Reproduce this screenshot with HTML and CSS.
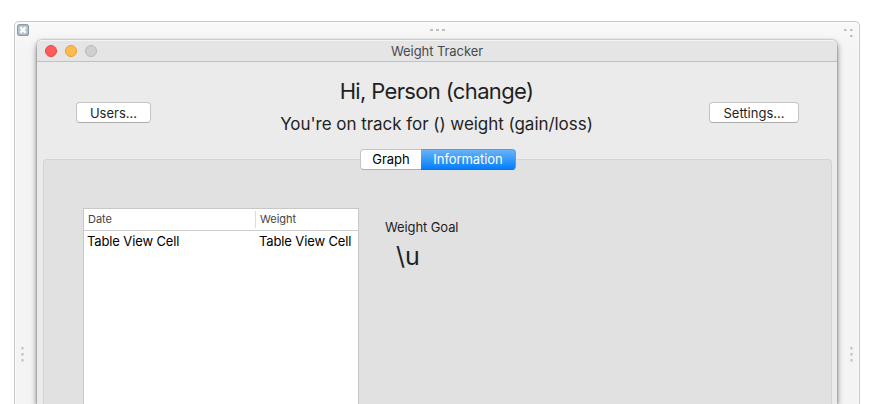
FILE: index.html
```html
<!DOCTYPE html>
<html lang="en">
<head>
<meta charset="utf-8">
<title>Weight Tracker</title>
<link rel="stylesheet" href="styles.css">
</head>
<body>
<div class="canvas">
  <svg class="close-box" width="12" height="12" viewBox="0 0 12 12"><rect x=".6" y=".6" width="10.8" height="10.8" rx="2" fill="#b9c6d1" stroke="#8d9ba8" stroke-width="1.2"/><path d="M3.4 3.4l5.2 5.2M8.6 3.4L3.4 8.6" stroke="#fff" stroke-width="2.2"/></svg>
  <svg class="grip grip-top" width="15" height="3" viewBox="0 0 15 3"><path d="M0 0h3v2H0zM6 0h3v2H6zM12 0h3v2h-3z"/></svg>
  <svg class="grip grip-corner" width="9" height="9" viewBox="0 0 9 9"><path d="M0 0h2.5v2H0zM6 0h2.5v2H6zM6 6h2.5v2H6z"/></svg>
  <svg class="grip grip-left" width="3" height="15" viewBox="0 0 3 15"><path d="M.5 0h2v2.5h-2zM.5 6h2v2.5h-2zM.5 12h2v2.5h-2z"/></svg>
  <svg class="grip grip-right" width="3" height="15" viewBox="0 0 3 15"><path d="M.5 0h2v2.5h-2zM.5 6h2v2.5h-2zM.5 12h2v2.5h-2z"/></svg>
  <main class="window">
    <header class="titlebar">
      <div class="lights"><i class="light red"></i><i class="light amber"></i><i class="light gray"></i></div>
      <span class="title">Weight Tracker</span>
    </header>
    <section class="top">
      <button class="btn users"><span>Users...</span></button>
      <div class="greeting">
        <div class="hi">Hi, Person (change)</div>
        <div class="track">You're on track for () weight (gain/loss)</div>
      </div>
      <button class="btn settings"><span>Settings...</span></button>
    </section>
    <nav class="tabs"><span class="tab">Graph</span><span class="tab active">Information</span></nav>
    <section class="panel">
      <div class="table">
        <div class="row head"><span class="date">Date</span><span class="weight">Weight</span></div>
        <div class="row"><span class="date cell">Table View Cell</span><span class="weight cell">Table View Cell</span></div>
      </div>
      <div class="goal">
        <div class="goal-label">Weight Goal</div>
        <div class="goal-value">\u</div>
      </div>
    </section>
  </main>
</div>
</body>
</html>
```

FILE: styles.css
```css
* { box-sizing: border-box; }
body {
  margin: 0;
  padding: 21px 26px 0 14px;
  height: 404px;
  overflow: hidden;
  background: #fff;
  font-family: Inter, "Liberation Sans", sans-serif;
  font-size: 13px;
  color: #1f1f1f;
}
.canvas {
  position: relative;
  height: 383px;
  padding: 18px 22px 0;
  border: 1px solid #c6c9ca;
  border-bottom: 0;
  border-radius: 5px 5px 0 0;
  background: linear-gradient(#f9f9f9, #f4f4f4 30px);
  box-shadow: inset 1px 1px 0 #fbfbfb, inset -1px 0 0 #fbfbfb;
}
.close-box { position: absolute; left: 2px; top: 2px; }
.grip { position: absolute; fill: #bdbdbd; }
.grip-top { left: 415px; top: 7px; }
.grip-corner { left: 829px; top: 7px; }
.grip-left { left: 6px; top: 325px; }
.grip-right { left: 835px; top: 325px; }
.window {
  display: flex;
  flex-direction: column;
  height: 364px;
  border-radius: 5px 5px 0 0;
  background: #ebebeb;
  box-shadow: 0 0 2px rgba(0,0,0,.4), 0 3px 6px rgba(0,0,0,.5);
}
.titlebar {
  display: grid;
  grid-template-columns: 100px 1fr 100px;
  align-items: center;
  flex: none;
  height: 22px;
  border-top: 1px solid #f4f4f4;
  border-bottom: 1px solid #c2c2c2;
  border-radius: 5px 5px 0 0;
  background: #e5e5e5;
}
.lights { display: flex; gap: 8px; padding-left: 8px; }
.light { width: 12px; height: 12px; border-radius: 50%; border: 1px solid; }
.red { background: #ff5b59; border-color: #e4474a; }
.amber { background: #ffbc4c; border-color: #dfa03c; }
.gray { background: #cfcfcf; border-color: #b9b9b9; }
.title { text-align: center; color: #4a4a4a; letter-spacing: -.07px; }
.top {
  display: flex;
  flex: none;
  height: 87px;
  padding: 0 38px 0 39px;
}
.btn {
  height: 21px;
  margin-top: 40px;
  padding: 0;
  border: 1px solid #c4c4c4;
  border-bottom-color: #adadad;
  border-radius: 4px;
  background: #fff;
  font: inherit;
  color: #1f1f1f;
}
.users { width: 75px; }
.settings { width: 90px; }
.greeting { flex: 1; padding-left: 13px; text-align: center; white-space: nowrap; }
.hi { margin-top: 15px; font-size: 22px; line-height: 28px; letter-spacing: -.65px; }
.track { margin-top: 7px; font-size: 17px; line-height: 24px; letter-spacing: -.04px; }
.tabs {
  position: relative;
  display: flex;
  flex: none;
  width: 156px;
  height: 21px;
  margin-left: 323px;
  line-height: 19px;
  text-align: center;
  border-radius: 4px;
  color: #000;
}
.tab {
  width: 61px;
  border: 1px solid #c4c4c4;
  border-right: 0;
  border-bottom-color: #adadad;
  border-radius: 4px 0 0 4px;
  background: #fff;
}
.active {
  width: 95px;
  border: 1px solid #4fa0ee;
  border-bottom-color: #0a6ff0;
  border-left: 0;
  border-radius: 0 4px 4px 0;
  background: linear-gradient(#67b3f8, #067efb);
  color: #fff;
  letter-spacing: -.07px;
}
.panel {
  display: flex;
  flex: 1;
  width: 789px;
  margin: -11px 0 0 6px;
  padding: 48px 0 0 39px;
  border: 1px solid #d4d4d4;
  border-bottom: 0;
  border-radius: 4px 4px 0 0;
  background: #e1e1e1;
}
.table {
  width: 276px;
  border: 1px solid #c8c8c8;
  border-bottom: 0;
  background: #fff;
  color: #000;
}
.row { display: flex; align-items: center; height: 21px; line-height: 17px; }
.head { height: 22px; border-bottom: 1px solid #cfcfcf; font-size: 11px; color: #444; }
.date { width: 171px; padding-left: 4px; }
.head .weight { border-left: 1px solid #ddd; padding-left: 4px; }
.cell { white-space: nowrap; letter-spacing: -.13px; }
.date.cell { padding-left: 3px; }
.weight.cell { padding-left: 4px; }
.goal { padding: 10px 0 0 26px; }
.goal-label { line-height: 18px; letter-spacing: -.1px; }
.goal-value { margin: 4px 0 0 11px; font-size: 25px; line-height: 32px; }
```
